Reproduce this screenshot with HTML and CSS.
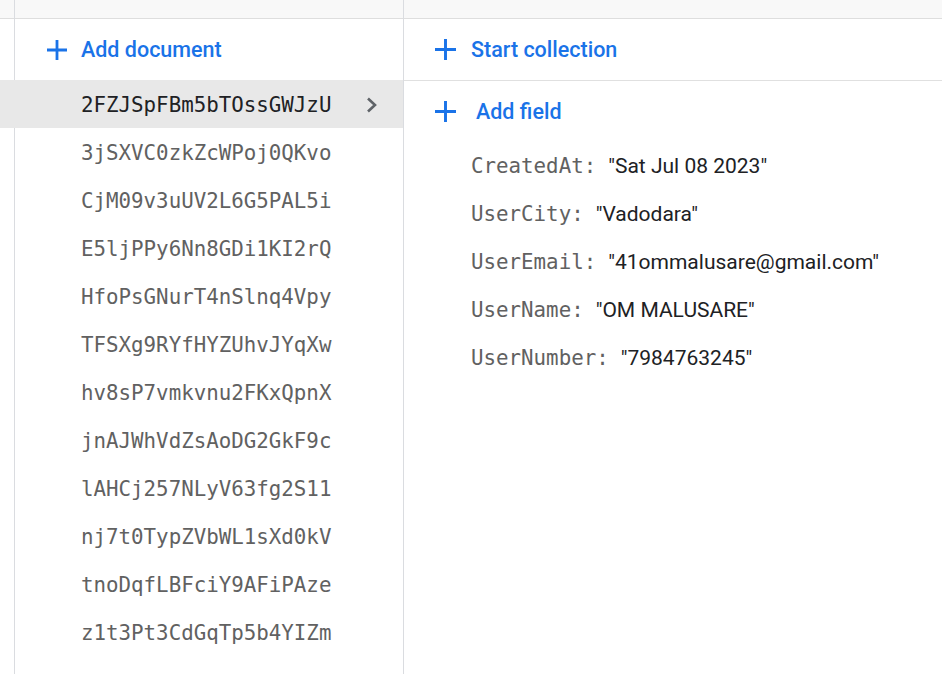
FILE: index.html
```
<!DOCTYPE html>
<html>
<head>
<meta charset="utf-8">
<link rel="stylesheet" href="styles.css">
</head>
<body>
<div class="app">
  <div class="gutter"><div class="topbar"></div></div>
  <div class="col col-left">
    <div class="topbar"></div>
    <div class="action-row">
      <svg class="plus" viewBox="0 0 20 20" width="20" height="20"><path d="M8.6 0h2.8v20H8.6zM0 8.6h20v2.8H0z" fill="#1a73e8"/></svg>
      <span class="action-text">Add document</span>
    </div>
    <div class="doc selected"><span class="doc-id">2FZJSpFBm5bTOssGWJzU</span>
      <svg class="chev" viewBox="0 0 12 16" width="12" height="16"><path d="M2 1.5l7 6.5-7 6.5" fill="none" stroke="#5f6368" stroke-width="2.6"/></svg>
    </div>
    <div class="doc"><span class="doc-id">3jSXVC0zkZcWPoj0QKvo</span></div>
    <div class="doc"><span class="doc-id">CjM09v3uUV2L6G5PAL5i</span></div>
    <div class="doc"><span class="doc-id">E5ljPPy6Nn8GDi1KI2rQ</span></div>
    <div class="doc"><span class="doc-id">HfoPsGNurT4nSlnq4Vpy</span></div>
    <div class="doc"><span class="doc-id">TFSXg9RYfHYZUhvJYqXw</span></div>
    <div class="doc"><span class="doc-id">hv8sP7vmkvnu2FKxQpnX</span></div>
    <div class="doc"><span class="doc-id">jnAJWhVdZsAoDG2GkF9c</span></div>
    <div class="doc"><span class="doc-id">lAHCj257NLyV63fg2S11</span></div>
    <div class="doc"><span class="doc-id">nj7t0TypZVbWL1sXd0kV</span></div>
    <div class="doc"><span class="doc-id">tnoDqfLBFciY9AFiPAze</span></div>
    <div class="doc"><span class="doc-id">z1t3Pt3CdGqTp5b4YIZm</span></div>
  </div>
  <div class="col col-right">
    <div class="topbar"></div>
    <div class="action-row right bordered">
      <svg class="plus" viewBox="0 0 20 20" width="21" height="21"><path d="M8.6 0h2.8v20H8.6zM0 8.6h20v2.8H0z" fill="#1a73e8"/></svg>
      <span class="action-text">Start collection</span>
    </div>
    <div class="action-row right field-add">
      <svg class="plus" viewBox="0 0 20 20" width="21" height="21"><path d="M8.6 0h2.8v20H8.6zM0 8.6h20v2.8H0z" fill="#1a73e8"/></svg>
      <span class="action-text">Add field</span>
    </div>
    <div class="field"><span class="key">CreatedAt:</span><span class="val">"Sat Jul 08 2023"</span></div>
    <div class="field"><span class="key">UserCity:</span><span class="val">"Vadodara"</span></div>
    <div class="field"><span class="key">UserEmail:</span><span class="val">"41ommalusare@gmail.com"</span></div>
    <div class="field"><span class="key">UserName:</span><span class="val">"OM MALUSARE"</span></div>
    <div class="field"><span class="key">UserNumber:</span><span class="val">"7984763245"</span></div>
  </div>
</div>
</body>
</html>
```
FILE: styles.css
```
html, body {
  margin: 0;
  padding: 0;
  background: #ffffff;
}
body {
  font-family: Roboto, "Liberation Sans", sans-serif;
  width: 942px;
  height: 674px;
  overflow: hidden;
}
.app {
  display: flex;
  height: 674px;
}
.gutter {
  width: 14px;
  flex: 0 0 14px;
  border-right: 1px solid #dadce0;
}
.topbar {
  height: 18px;
  background: #f8f8f8;
  border-bottom: 1px solid #dedede;
}
.col {
  display: flex;
  flex-direction: column;
}
.col-left {
  width: 388px;
  flex: 0 0 388px;
  border-right: 1px solid #dadce0;
}
.col-right {
  flex: 1;
}
.action-row {
  height: 61px;
  flex: 0 0 auto;
  display: flex;
  align-items: center;
  padding-left: 32px;
  gap: 14px;
}
.action-row.right {
  padding-left: 31px;
  gap: 15px;
}
.action-row.bordered {
  height: 61px;
  border-bottom: 1px solid #e0e0e0;
}
.action-row.field-add {
  height: 61px;
  gap: 20px;
}
.action-text {
  color: #1a73e8;
  font-size: 21.5px;
  font-weight: 500;
}
.doc {
  height: 48px;
  flex: 0 0 auto;
  display: flex;
  align-items: center;
  padding-left: 66px;
  padding-top: 1px;
  box-sizing: border-box;
}
.doc.selected {
  background: #e8e8e8;
  box-shadow: -15px 0 0 0 #e8e8e8;
}
.doc-id {
  font-family: "DejaVu Sans Mono", "Liberation Mono", monospace;
  font-size: 20.8px;
  color: #616161;
}
.doc.selected .doc-id {
  color: #202124;
}
.chev {
  margin-left: 35px;
}
.field {
  height: 48px;
  flex: 0 0 auto;
  display: flex;
  align-items: center;
  padding-left: 67px;
}
.key {
  font-family: "DejaVu Sans Mono", "Liberation Mono", monospace;
  font-size: 20.8px;
  color: #616161;
  margin-right: 12px;
}
.val {
  font-size: 21px;
  color: #202124;
}
```
